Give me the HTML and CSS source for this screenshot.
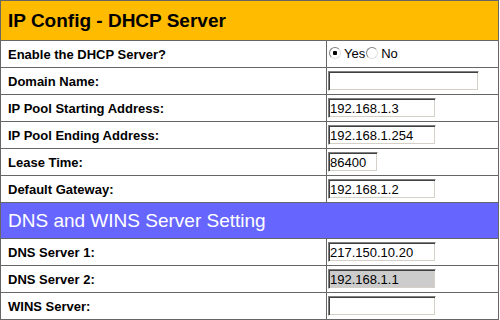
FILE: index.html
```html
<!DOCTYPE html>
<html>
<head>
    <title>IP Config - DHCP Server</title>
    <link rel="stylesheet" href="styles.css">
</head>
<body>
    <form id="dhcpForm">
        <table class="config-table">
            <tr>
                <td colspan="2" class="section-title dhcp">IP Config - DHCP Server</td>
            </tr>
            <tr>
                <td class="label">Enable the DHCP Server?</td>
                <td class="value">
                    <label class="choice"><input type="radio" name="dhcp" value="1" checked>Yes</label><label class="choice"><input type="radio" name="dhcp" value="0">No</label>
                </td>
            </tr>
            <tr>
                <td class="label">Domain Name:</td>
                <td class="value"><input type="text" class="input-field wide" name="domain"></td>
            </tr>
            <tr>
                <td class="label">IP Pool Starting Address:</td>
                <td class="value"><input type="text" class="input-field ip" name="start" value="192.168.1.3"></td>
            </tr>
            <tr>
                <td class="label">IP Pool Ending Address:</td>
                <td class="value"><input type="text" class="input-field ip" name="end" value="192.168.1.254"></td>
            </tr>
            <tr>
                <td class="label">Lease Time:</td>
                <td class="value"><input type="text" class="input-field short" name="lease" value="86400"></td>
            </tr>
            <tr>
                <td class="label">Default Gateway:</td>
                <td class="value"><input type="text" class="input-field ip" name="gateway" value="192.168.1.2"></td>
            </tr>
            <tr>
                <td colspan="2" class="section-title dns">DNS and WINS Server Setting</td>
            </tr>
            <tr>
                <td class="label">DNS Server 1:</td>
                <td class="value"><input type="text" class="input-field ip" name="dns1" value="217.150.10.20"></td>
            </tr>
            <tr>
                <td class="label">DNS Server 2:</td>
                <td class="value"><input type="text" class="input-field ip" name="dns2" value="192.168.1.1" disabled></td>
            </tr>
            <tr>
                <td class="label">WINS Server:</td>
                <td class="value"><input type="text" class="input-field ip" name="wins"></td>
            </tr>
        </table>
    </form>
</body>
</html>
```

FILE: styles.css
```css
body {
    margin: 0;
    background-color: #fff;
    font-family: "Liberation Sans", Arial, sans-serif;
}

.config-table {
    width: 499px;
    border-collapse: collapse;
    border: 1px solid #666;
}

.config-table td {
    border: 1px solid #666;
    padding: 0;
}

.section-title {
    padding-left: 7px !important;
    font-size: 19px;
}

.dhcp {
    height: 39px;
    background-color: #ffbb00;
    color: #000;
    font-weight: bold;
}

.dns {
    height: 35px;
    background-color: #6666ff;
    color: #fff;
}

.label {
    width: 318px;
    height: 26px;
    padding-left: 7px !important;
    font-size: 13px;
    font-weight: bold;
    color: #000;
}

.value {
    padding-left: 1px !important;
    font-size: 13px;
}

.choice {
    display: inline-flex;
    align-items: center;
}

.choice input {
    appearance: none;
    width: 12px;
    height: 12px;
    margin: 0 3px 0 1px;
    border-radius: 50%;
    border: 1px solid #808080;
    border-right-color: #e0e0e0;
    border-bottom-color: #e0e0e0;
    background-color: #fff;
}

.choice input:checked {
    background: radial-gradient(circle, #000 0, #000 2px, #fff 2.5px);
}

.input-field {
    box-sizing: border-box;
    height: 20px;
    padding: 0 1px;
    margin: 0;
    vertical-align: middle;
    font-family: "Liberation Sans", Arial, sans-serif;
    font-size: 13px;
    color: #000;
    background-color: #fff;
    border: 1px solid;
    border-color: #808080 #fff #fff #808080;
    box-shadow: inset 1px 1px 0 #404040, inset -1px -1px 0 #d4d0c8;
}

.input-field:disabled {
    background-color: #ccc;
    color: #000;
}

.wide {
    width: 151px;
}

.ip {
    width: 108px;
}

.short {
    width: 50px;
}
```
